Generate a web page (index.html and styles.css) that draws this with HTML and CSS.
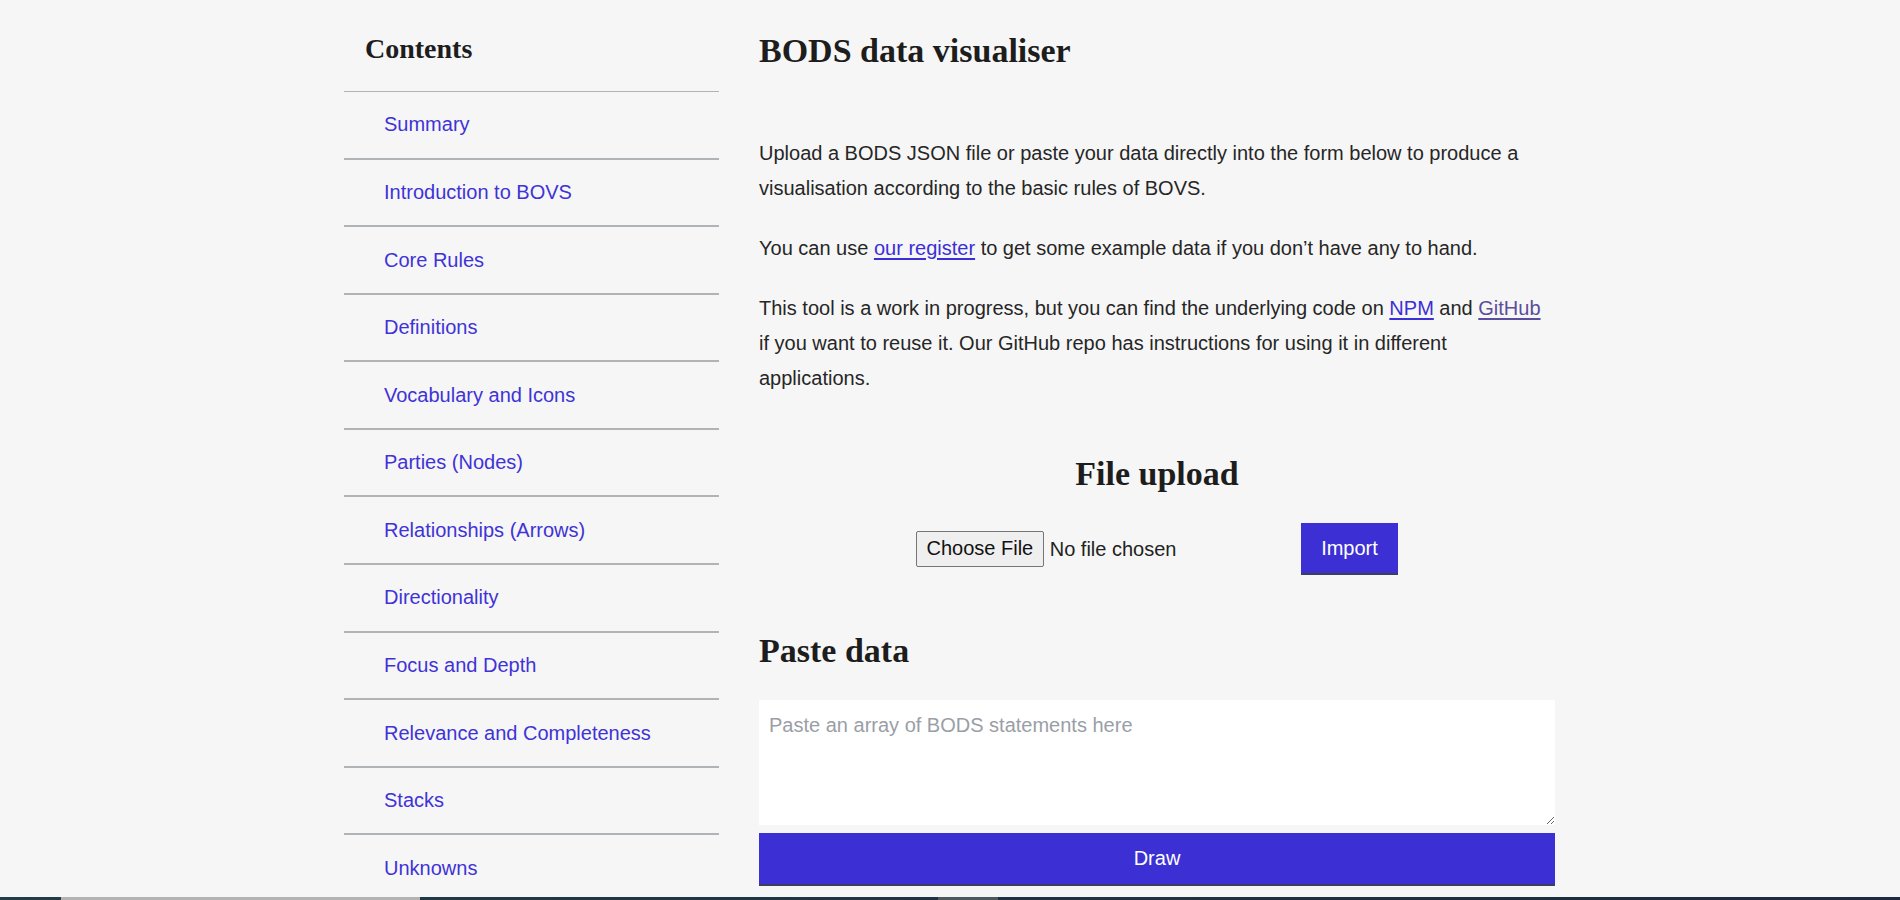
FILE: index.html
```html
<!DOCTYPE html>
<html lang="en">
<head>
<meta charset="utf-8">
<title>BODS data visualiser</title>
<link rel="stylesheet" href="styles.css">
</head>
<body>
<div class="layout">
  <nav class="toc">
    <h2 class="toc-title">Contents</h2>
    <ul class="toc-list">
      <li><a href="#">Summary</a></li>
      <li><a href="#">Introduction to BOVS</a></li>
      <li><a href="#">Core Rules</a></li>
      <li><a href="#">Definitions</a></li>
      <li><a href="#">Vocabulary and Icons</a></li>
      <li><a href="#">Parties (Nodes)</a></li>
      <li><a href="#">Relationships (Arrows)</a></li>
      <li><a href="#">Directionality</a></li>
      <li><a href="#">Focus and Depth</a></li>
      <li><a href="#">Relevance and Completeness</a></li>
      <li><a href="#">Stacks</a></li>
      <li><a href="#">Unknowns</a></li>
    </ul>
  </nav>
  <main class="main">
    <h1 class="title">BODS data visualiser</h1>
    <p>Upload a BODS JSON file or paste your data directly into the form below to produce a visualisation according to the basic rules of BOVS.</p>
    <p>You can use <a class="link" href="#">our register</a> to get some example data if you don’t have any to hand.</p>
    <p>This tool is a work in progress, but you can find the underlying code on <a class="link" href="#">NPM</a> and <a class="link visited" href="#">GitHub</a> if you want to reuse it. Our GitHub repo has instructions for using it in different applications.</p>
    <h2 class="section-title centered">File upload</h2>
    <div class="upload-row">
      <input class="file-input" type="file">
      <button class="btn import-btn" type="button">Import</button>
    </div>
    <h2 class="section-title paste-title">Paste data</h2>
    <textarea class="paste-area" placeholder="Paste an array of BODS statements here"></textarea>
    <button class="btn draw-btn" type="button">Draw</button>
  </main>
</div>
<footer class="footer">
  <span class="seg seg-a"></span>
  <span class="seg seg-b"></span>
  <span class="seg seg-c"></span>
  <span class="seg seg-d"></span>
  <span class="seg seg-e"></span>
</footer>
</body>
</html>
```

FILE: styles.css
```css
html, body {
  margin: 0;
  padding: 0;
}

body {
  background: #f6f6f6;
  color: #222222;
  font-family: "Liberation Sans", Arial, sans-serif;
  font-size: 20px;
  overflow: hidden;
}

.layout {
  width: 1212px;
  margin: 0 auto;
  height: 897px;
  display: grid;
  grid-template-columns: 375px 796px;
  column-gap: 40px;
  overflow: hidden;
}

/* ---------- Table of contents ---------- */
.toc {
  overflow: hidden;
}

.toc-title {
  margin: 0;
  padding: 33px 21px 26px;
  font-family: "Liberation Serif", "Times New Roman", serif;
  font-weight: 700;
  font-size: 28px;
  line-height: 32px;
  color: #1d1d1d;
  border-bottom: 1px solid #b1b4b7;
}

.toc-list {
  list-style: none;
  margin: 0;
  padding: 0;
}

.toc-list li {
  border-bottom: 2px solid #b1b4b7;
}

.toc-list a {
  display: block;
  padding: 17.4px 40px 18.2px;
  line-height: 30px;
  font-size: 20px;
  color: #3f33d6;
  text-decoration: none;
}

/* ---------- Main ---------- */
.main {
  display: flex;
  flex-direction: column;
}

.title {
  margin: 28.5px 0 63px;
  font-family: "Liberation Serif", "Times New Roman", serif;
  font-weight: 700;
  font-size: 34px;
  line-height: 44px;
  color: #1d1d1d;
}

.main p {
  margin: 0 0 25px;
  line-height: 35px;
  font-size: 20px;
  color: #262626;
}

.main p:last-of-type {
  margin-bottom: 0;
}

.link {
  color: #3b2fd6;
  text-decoration: underline;
  text-decoration-thickness: 2px;
  text-underline-offset: 3px;
}

.link.visited {
  color: #5b4d9c;
}

.section-title {
  font-family: "Liberation Serif", "Times New Roman", serif;
  font-weight: 700;
  font-size: 34px;
  line-height: 44px;
  color: #1d1d1d;
}

.centered {
  text-align: center;
  margin: 56.8px 0 26.5px;
}

.paste-title {
  margin: 54.2px 0 26.8px;
}

.upload-row {
  display: flex;
  justify-content: center;
  align-items: center;
  gap: 20px;
  height: 52px;
}

.file-input {
  width: 365px;
  font-family: "Liberation Sans", Arial, sans-serif;
  font-size: 20px;
  color: #222222;
}

.file-input::file-selector-button {
  font-family: "Liberation Sans", Arial, sans-serif;
  font-size: 20px;
  color: #111111;
  background: #efefef;
  border: 1px solid #767676;
  border-radius: 2px;
  padding: 5.5px 9.5px;
  margin-right: 6px;
}

.btn {
  font-family: "Liberation Sans", Arial, sans-serif;
  font-size: 20px;
  color: #ffffff;
  background: #3c30d5;
  border: 0;
  border-bottom: 2px solid #3b3e5c;
  cursor: pointer;
}

.import-btn {
  width: 97px;
  height: 52px;
  padding: 2px 0 0;
}

.paste-area {
  display: block;
  box-sizing: border-box;
  width: 100%;
  height: 125px;
  margin: 0 0 8px;
  padding: 8px 10px;
  border: none;
  background: #ffffff;
  font-family: "Liberation Sans", Arial, sans-serif;
  font-size: 20px;
  line-height: 35px;
  color: #222222;
  outline: none;
}

.paste-area::placeholder {
  color: #9a9ea6;
}

.draw-btn {
  display: block;
  width: 100%;
  height: 53px;
  padding: 1px 0 0;
  border-bottom-width: 2.5px;
}

/* ---------- Footer strip ---------- */
.footer {
  display: flex;
  height: 40px;
  background: linear-gradient(90deg, #243c46, #1e2a40);
}

.seg {
  display: block;
  height: 100%;
}

.seg-a { width: 61px; }
.seg-b { width: 359px; background: #b3b3b3; }
.seg-c { width: 518px; }
.seg-d { width: 60px; background: #4c5a60; }
.seg-e { flex: 1; }
```
